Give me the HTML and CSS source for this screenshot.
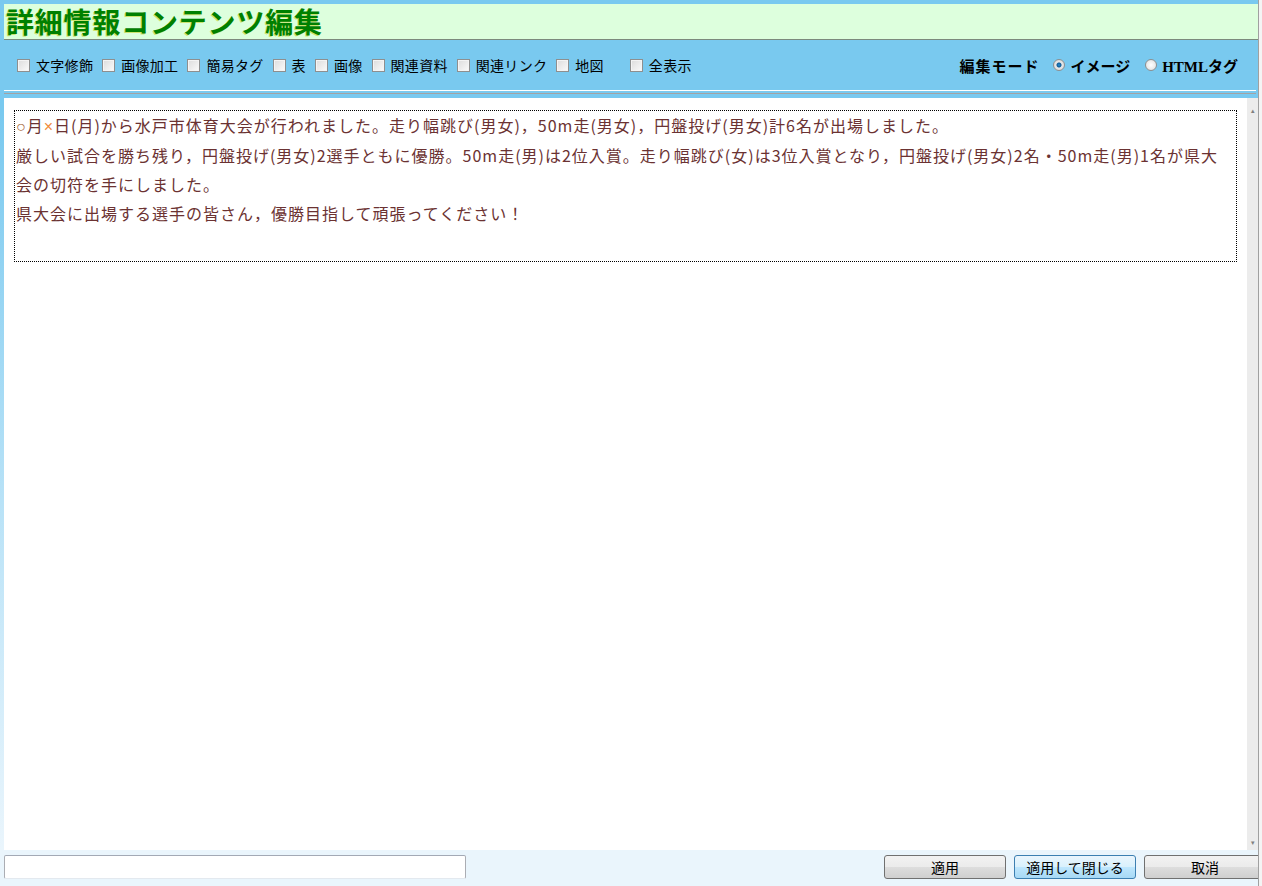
FILE: index.html
```html
<!DOCTYPE html>
<html lang="ja">
<head>
  <meta charset="UTF-8">
  <title>詳細情報コンテンツ編集</title>
  <link rel="stylesheet" href="styles.css">
</head>
<body>
  <div class="frame">
    <div class="window">
      <h1 class="title">詳細情報コンテンツ編集</h1>

      <div class="toolbar">
        <div class="tools">
          <label class="tool"><input type="checkbox">文字修飾</label>
          <label class="tool"><input type="checkbox">画像加工</label>
          <label class="tool"><input type="checkbox">簡易タグ</label>
          <label class="tool"><input type="checkbox">表</label>
          <label class="tool"><input type="checkbox">画像</label>
          <label class="tool"><input type="checkbox">関連資料</label>
          <label class="tool"><input type="checkbox">関連リンク</label>
          <label class="tool"><input type="checkbox">地図</label>
          <label class="tool tool-all"><input type="checkbox">全表示</label>
        </div>
        <div class="mode">
          <span class="mode-label">編集モード</span>
          <label class="radio"><input type="radio" name="mode" checked>イメージ</label>
          <label class="radio"><input type="radio" name="mode">HTMLタグ</label>
        </div>
      </div>

      <div class="rule"></div>

      <div class="main">
        <div class="canvas">
          <div class="editor" contenteditable="true"><span class="mark">○</span>月<span class="mark mark-x">×</span>日(月)から水戸市体育大会が行われました。走り幅跳び(男女)，50m走(男女)，円盤投げ(男女)計6名が出場しました。<br>厳しい試合を勝ち残り，円盤投げ(男女)2選手ともに優勝。50m走(男)は2位入賞。走り幅跳び(女)は3位入賞となり，円盤投げ(男女)2名・50m走(男)1名が県大会の切符を手にしました。<br>県大会に出場する選手の皆さん，優勝目指して頑張ってください！</div>
        </div>
        <div class="scrollbar">
          <span class="arrow">&#9652;</span>
          <span class="arrow">&#9662;</span>
        </div>
      </div>

      <div class="footer">
        <input type="text" class="status">
        <div class="buttons">
          <button class="btn">適用</button>
          <button class="btn btn-primary">適用して閉じる</button>
          <button class="btn">取消</button>
        </div>
      </div>
    </div>
    <div class="edge"></div>
  </div>
</body>
</html>
```

FILE: styles.css
```css
html, body {
  margin: 0;
  padding: 0;
}
body {
  font-family: "Noto Sans CJK JP", sans-serif;
  overflow: hidden;
}
.frame {
  display: flex;
  height: 886px;
}
.window {
  flex: 1;
  display: flex;
  flex-direction: column;
  overflow: hidden;
  background: linear-gradient(#79c9ef 0, #79c9ef 110px, #b8e2f7 500px, #eaf5fc 850px);
}
.edge {
  width: 3px;
  border-left: 1px solid #a0a0a0;
  background: #f4f4f4;
}

.title {
  margin: 4px 0 0 4px;
  height: 35px;
  border-bottom: 1px solid #7c8a7c;
  background: #ddffdd;
  color: #008000;
  font-size: 28px;
  font-weight: bold;
  line-height: 35px;
  letter-spacing: 0.8px;
  padding-left: 2px;
  text-shadow: -1px 1px 0 rgba(190, 200, 0, 0.5);
}

.toolbar {
  height: 50px;
  display: flex;
  align-items: center;
  justify-content: space-between;
  padding: 0 20px 0 17px;
}
.tools {
  display: flex;
  align-items: center;
  gap: 9px;
}
.tool {
  display: flex;
  align-items: center;
  gap: 6px;
  font-size: 14px;
  letter-spacing: 0.3px;
  color: #000;
}
.tool-all {
  margin-left: 17px;
}
.tool input {
  appearance: none;
  margin: 0;
  width: 13px;
  height: 13px;
  border: 1px solid #8e8f8f;
  background: linear-gradient(135deg, #dcdcdc, #fbfbfb);
  box-shadow: inset 0 0 0 1px #f4f4f4;
}

.mode {
  display: flex;
  align-items: center;
  font-family: "Liberation Serif", "Noto Sans CJK JP", serif;
  font-weight: bold;
  font-size: 15px;
  color: #000;
}
.mode-label {
  letter-spacing: 1px;
  margin-right: 14px;
}
.radio {
  display: flex;
  align-items: center;
  gap: 5px;
  margin-right: 15px;
}
.radio:last-child {
  margin-right: 0;
}
.radio input {
  appearance: none;
  margin: 0;
  width: 12px;
  height: 12px;
  border: 1px solid #8e8f8f;
  border-radius: 50%;
  background: radial-gradient(circle, #ffffff 0, #dcdcdc 100%);
}
.radio input:checked {
  background: radial-gradient(circle, #2f8fd0 0, #0d5c98 2px, #e8e8e8 3px, #d0d0d0 100%);
}

.rule {
  margin: 0 2px 4px 4px;
  height: 2px;
  border-top: 1px solid #ffffff;
  border-bottom: 1px solid #a3a3a3;
}

.main {
  flex: 1;
  display: flex;
  margin-left: 4px;
}
.canvas {
  flex: 1;
  background: #fff;
  padding: 12px 10px;
}
.editor {
  border: 1px dotted #000;
  height: 150px;
  padding: 0 10px 0 1px;
  font-size: 16px;
  line-height: 29px;
  letter-spacing: 1px;
  color: #6b3232;
  outline: none;
}
.mark {
  font-family: "Liberation Sans", sans-serif;
  color: #a8683a;
}
.mark-x {
  color: #f08a3c;
}
.scrollbar {
  width: 11px;
  background: #ececec;
  display: flex;
  flex-direction: column;
  justify-content: space-between;
  align-items: center;
  padding: 8px 0 4px;
}
.arrow {
  font-size: 7px;
  line-height: 8px;
  color: #808080;
}

.footer {
  height: 36px;
  background: #eaf5fc;
  display: flex;
  justify-content: space-between;
  align-items: flex-start;
  padding: 5px 0 0 4px;
  box-sizing: border-box;
}
.status {
  width: 462px;
  height: 24px;
  box-sizing: border-box;
  margin: 0;
  border: 1px solid #abadb3;
  border-top-color: #a3a9b5;
  border-bottom-color: #e3e9ef;
  border-radius: 2px;
  background: #fff;
}
.buttons {
  display: flex;
  gap: 8px;
  margin-right: -8px;
}
.btn {
  width: 122px;
  height: 24px;
  margin: 0;
  padding: 0;
  font-family: "Noto Sans CJK JP", sans-serif;
  font-size: 14px;
  line-height: 20px;
  color: #000;
  border: 1px solid #707070;
  border-radius: 3px;
  background: linear-gradient(#f2f2f2 0, #ebebeb 50%, #dddddd 51%, #cfcfcf 100%);
}
.btn-primary {
  border-color: #3c7fb1;
  background: linear-gradient(#eaf6fd 0, #d9f0fc 50%, #bee6fd 51%, #a7d9f5 100%);
}
```
